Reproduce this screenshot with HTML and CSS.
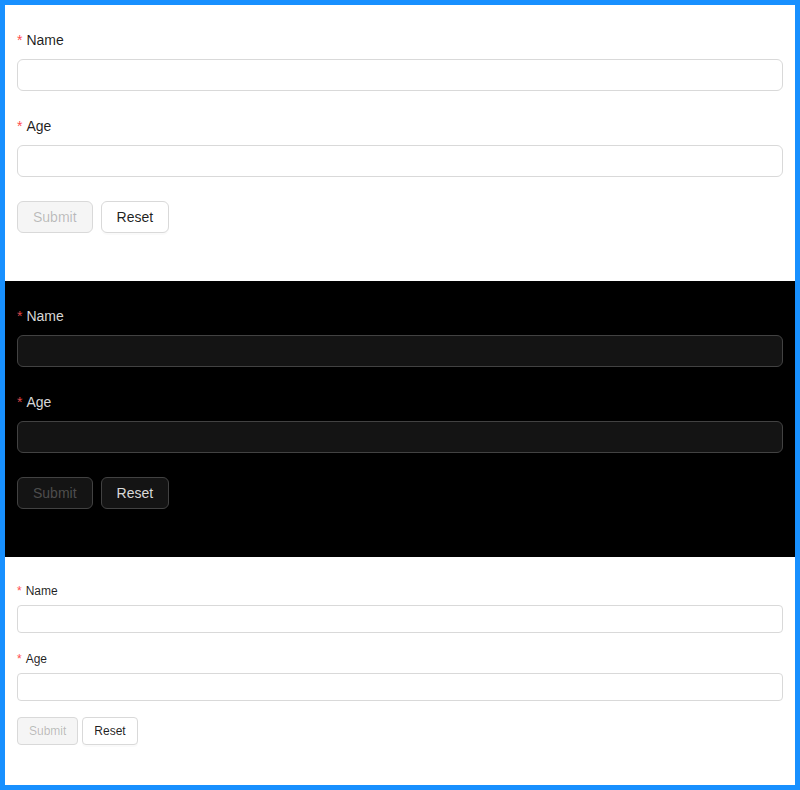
FILE: index.html
```html
<!DOCTYPE html>
<html>
<head>
<meta charset="utf-8">
<link rel="stylesheet" href="styles.css">
</head>
<body>
<div class="frame">
  <form class="form light">
    <div class="item">
      <label class="label"><span class="req">*</span>Name</label>
      <input class="input" type="text">
    </div>
    <div class="item">
      <label class="label"><span class="req">*</span>Age</label>
      <input class="input" type="text">
    </div>
    <div class="item actions">
      <button type="button" class="btn" disabled>Submit</button>
      <button type="button" class="btn">Reset</button>
    </div>
  </form>
  <form class="form dark">
    <div class="item">
      <label class="label"><span class="req">*</span>Name</label>
      <input class="input" type="text">
    </div>
    <div class="item">
      <label class="label"><span class="req">*</span>Age</label>
      <input class="input" type="text">
    </div>
    <div class="item actions">
      <button type="button" class="btn" disabled>Submit</button>
      <button type="button" class="btn">Reset</button>
    </div>
  </form>
  <form class="form light small">
    <div class="item">
      <label class="label"><span class="req">*</span>Name</label>
      <input class="input" type="text">
    </div>
    <div class="item">
      <label class="label"><span class="req">*</span>Age</label>
      <input class="input" type="text">
    </div>
    <div class="item actions">
      <button type="button" class="btn" disabled>Submit</button>
      <button type="button" class="btn">Reset</button>
    </div>
  </form>
</div>
</body>
</html>
```
FILE: styles.css
```css
* { box-sizing: border-box; }
html, body { margin: 0; padding: 0; }
body {
  font-family: "Liberation Sans", Arial, sans-serif;
  font-size: 14px;
  width: 800px;
  height: 790px;
}
.frame {
  border: 5px solid #1890ff;
  height: 790px;
  display: flex;
  flex-direction: column;
}
.form {
  display: flex;
  flex-direction: column;
  padding: 24px 12px;
  margin: 0;
}
.item {
  display: flex;
  flex-direction: column;
  margin-bottom: 24px;
}
.label {
  height: 30px;
  line-height: 22px;
  padding-bottom: 8px;
  font-size: 14px;
  display: flex;
  align-items: center;
  height: 30px;
}
.label .req {
  display: inline-block;
  margin-right: 4px;
  font-size: 14px;
  line-height: 1;
}
.input {
  height: 32px;
  width: 100%;
  border-radius: 6px;
  border: 1px solid #d9d9d9;
  font-family: inherit;
  font-size: 14px;
  padding: 4px 11px;
  outline: none;
  background: #fff;
}
.actions {
  flex-direction: row;
  gap: 8px;
}
.btn {
  height: 32px;
  padding: 4px 15px;
  border-radius: 6px;
  font-family: inherit;
  font-size: 14px;
  line-height: 22px;
  border: 1px solid #d9d9d9;
  background: #fff;
  color: rgba(0,0,0,0.88);
  box-shadow: 0 2px 0 rgba(0,0,0,0.02);
  cursor: pointer;
}
.btn:disabled {
  background: rgba(0,0,0,0.04);
  color: rgba(0,0,0,0.25);
  box-shadow: none;
  cursor: not-allowed;
}
.light { background: #fff; color: rgba(0,0,0,0.88); }
.light .req { color: #ff4d4f; }

.dark { background: #000; color: rgba(255,255,255,0.85); }
.dark .req { color: #dc4446; }
.dark .input { background: #141414; border-color: #424242; color: rgba(255,255,255,0.85); }
.dark .btn { background: #141414; border-color: #424242; color: rgba(255,255,255,0.85); box-shadow: 0 2px 0 rgba(0,0,0,0.02); }
.dark .btn:disabled { background: rgba(255,255,255,0.08); border-color: #424242; color: rgba(255,255,255,0.25); }

.small { flex: 1; }
.small .item { margin-bottom: 16px; }
.small .label { height: 24px; line-height: 20px; padding-bottom: 4px; font-size: 12px; }
.small .label .req { font-size: 12px; }
.small .input { height: 28px; border-radius: 4px; font-size: 12px; padding: 2px 7px; }
.small .actions { gap: 4px; }
.small .btn { height: 28px; font-size: 12px; padding: 0 11px; line-height: 20px; border-radius: 4px; }
```
